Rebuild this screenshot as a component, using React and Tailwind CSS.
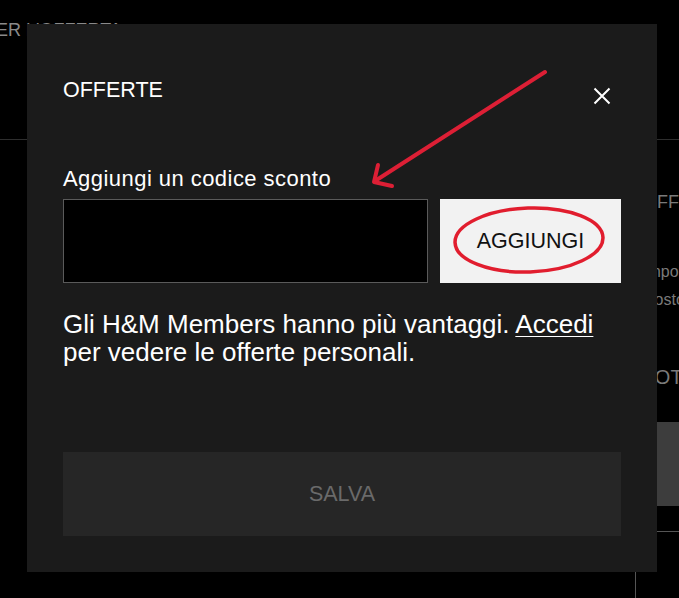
const font = "font-['Liberation_Sans',Arial,sans-serif]";

const Sidebar = () => (
  <div className="flex">
    <div className="w-[635px] shrink-0" />
    <div className="w-[260px] shrink-0">
      <div className="h-[391px] pl-[8px] text-[#7a7a7a]">
        <p className="pt-[52px] text-[18px] leading-[20px]">OFFERTE</p>
        <p className="mt-[50px] text-[16px] leading-[20px]">Importo ordine</p>
        <p className="mt-[8px] text-[16px] leading-[20px]">Costo di spedizione</p>
        <p className="mt-[56px] text-[20px] leading-[22px]">TOTALE</p>
        <div className="mt-[34px] h-[84px] bg-[#3d3d3d]" />
      </div>
      <div className="h-[80px] border-t border-l border-[#555]" />
    </div>
  </div>
);

export default function App() {
  return (
    <div className={`relative h-[598px] w-[679px] overflow-hidden bg-black ${font}`}>
      {/* page behind the dialog */}
      <div className="h-[140px] border-b border-[#2e2e2e] pt-[20px]">
        <p className="-ml-[16px] whitespace-nowrap text-[18px] leading-[20px] text-[#8a8a8a]">PER L'OFFERTA</p>
      </div>
      <Sidebar />

      {/* dialog */}
      <div className="absolute left-[27px] top-[24px] h-[548px] w-[630px] bg-[#1b1b1b] px-[36px] pt-[54px]">
        <div className="flex h-[24px] items-start justify-between">
          <h2 className="text-[21.5px] leading-[24px] text-white">OFFERTE</h2>
          <svg className="mr-[10px] mt-[9px]" width="18" height="18" viewBox="0 0 18 18" fill="none">
            <path d="M1.5 1.5 16.5 16.5M16.5 1.5 1.5 16.5" stroke="#fff" strokeWidth="2" />
          </svg>
        </div>

        <label className="mt-[65px] block text-[22px] leading-[24px] tracking-[0.45px] text-white">Aggiungi un codice sconto</label>
        <div className="mt-[8px] flex gap-[12px]">
          <div className="h-[84px] w-[365px] border border-[#5a5a5a] bg-black" />
          <button className="relative flex h-[84px] flex-1 items-center justify-center bg-[#f2f2f2] text-[21.5px] text-[#111]">
            AGGIUNGI
            <svg className="absolute left-0 top-0" width="181" height="84" viewBox="0 0 181 84" fill="none">
              <ellipse cx="89" cy="41" rx="74" ry="32" stroke="#e11d2e" strokeWidth="3.5" transform="rotate(-2 89 41)" />
            </svg>
          </button>
        </div>

        <p className="mt-[27px] text-[26px] leading-[28px] text-white">
          Gli H&amp;M Members hanno più vantaggi.{" "}
          <a className="underline decoration-1 underline-offset-[3px]">Accedi</a>
          <br />
          per vedere le offerte personali.
        </p>

        <button className="mt-[86px] flex h-[84px] w-full items-center justify-center bg-[#262626] text-[21.5px] text-[#6a6a6a]">SALVA</button>
      </div>

      {/* red annotation arrow */}
      <svg className="pointer-events-none absolute left-0 top-0" width="679" height="598" viewBox="0 0 679 598" fill="none">
        <g stroke="#dd1f35" strokeWidth="4" strokeLinecap="round" strokeLinejoin="round">
          <line x1="545" y1="72" x2="375" y2="181" />
          <polyline points="378,165 374,182 392,186" />
        </g>
      </svg>
    </div>
  );
}
